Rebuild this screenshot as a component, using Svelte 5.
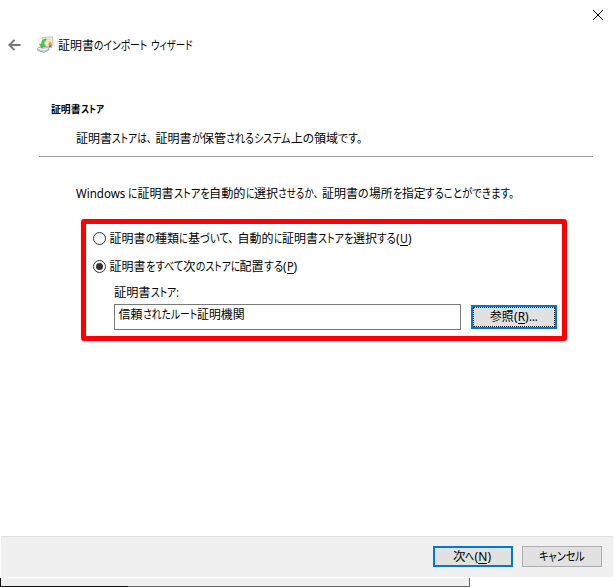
<script>
  // Each run is [text, width, kind]; "u" marks an access key.
  const lines = {
    title: [['証明書', 36], ['のインポート', 53], ['', 4], ['ウィザード', 41.5]],
    heading: [['証明書', 29.5], ['ストア', 23]],
    sub: [['証明書', 36], ['ストアは、', 39.5], ['', 4], ['証明書', 36], ['が', 10.5], ['保管', 24], ['されるシステム', 64.5], ['上の', 23.5], ['領域', 24], ['です。', 24.5]],
    intro: [['Windows', 49], ['', 3], ['に', 9.5], ['証明書', 36], ['ストアを', 35.5], ['自動的', 36.5], ['に', 8.5], ['選択', 24], ['させるか、', 40], ['', 4], ['証明書', 36], ['の', 11], ['場所', 23.5], ['を', 9], ['指定', 23.5], ['することができます。', 89.5]],
    auto: [['証明書', 36], ['の', 9.5], ['種類', 24], ['に', 9], ['基', 12], ['づいて、', 33.5], ['', 4], ['自動的', 36], ['に', 8.5], ['証明書', 36], ['ストアを', 35], ['選択', 24], ['する', 19], ['(', 4], ['U', 8, 'u'], [')', 4]],
    manual: [['証明書', 36], ['をすべて', 37.5], ['次', 12.5], ['のストアに', 44], ['配置', 24], ['する', 19.5], ['(', 4], ['P', 6.5, 'u'], [')', 4]],
    label: [['証明書', 36.5], ['ストア:', 27.5]],
    value: [['信頼', 24], ['されたルート', 54], ['証明機関', 47.5]],
    browse: [['参照', 23.5], ['(', 4], ['R', 7, 'u'], [')', 4], ['...', 9]],
    next: [['次', 12.5], ['へ', 9], ['(', 4], ['N', 9, 'u'], [')', 4]],
    cancel: [['キャンセル', 45.5]]
  };

  function fit(node, width) {
    const natural = node.offsetWidth;
    if (natural) node.style.transform = `scaleX(${width / natural})`;
  }
</script>

{#snippet line(runs)}<span class="line">{#each runs as [text, width, kind]}<span class="run" class:key={kind === 'u'} style="width:{width}px"><span class="glyphs" use:fit={width}>{text}</span></span>{/each}</span>{/snippet}

<div class="window">
  <div class="caption">
    <svg width="12" height="12" viewBox="0 0 12 12"><path d="M1 1 L11 11 M11 1 L1 11" stroke="#000" stroke-width="1" /></svg>
  </div>
  <header>
    <svg class="back" width="13" height="12" viewBox="0 0 13 12" fill="none" stroke="#777" stroke-width="2"><path d="M12.5 6H1.5M6.5 .9 1.4 6l5.1 5.1" /></svg>
    <svg class="cert" width="17" height="17" viewBox="0 0 17 17">
      <path d="M5 1.5 15.5.8 16 9.5 5.8 11z" fill="#f5f1dc" stroke="#b9b5a4" stroke-width=".8" />
      <path d="M8 3.5 14 3M9 5.5l5-.4" stroke="#d0cab0" stroke-width=".8" />
      <path d="m12 8.5-.3 3.6 1.4-.8 1.5.8-.3-3.6z" fill="#3d7cd0" />
      <circle cx="13.1" cy="7.7" r="1.8" fill="#f0a21c" />
      <path d="m.8 12 4.5-2 6.4 1.7v2.3L7 16.4.8 14.4z" fill="#d0d3d3" stroke="#8f9496" stroke-width=".8" />
      <path d="m1.2 12.2 5.8 1.6 4.5-2" fill="none" stroke="#fafafa" />
      <path d="M8.7 2.6C5.7 3.2 4.4 5.4 4.5 8.3L2.3 8 5 12.3l3.7-3.2-1.8-.5c0-2.3.6-4 2.3-4.6z" fill="#42cc45" stroke="#239b32" stroke-width=".4" />
    </svg>
    <h1>{@render line(lines.title)}</h1>
  </header>
  <main>
    <h2>{@render line(lines.heading)}</h2>
    <p class="sub">{@render line(lines.sub)}</p>
    <hr />
    <p class="intro">{@render line(lines.intro)}</p>
    <section>
      <div class="radio"><i></i>{@render line(lines.auto)}</div>
      <div class="radio second"><i class="on"></i>{@render line(lines.manual)}</div>
      <div class="label">{@render line(lines.label)}</div>
      <div class="row">
        <div class="field">{@render line(lines.value)}</div>
        <button class="browse"><span class="focus">{@render line(lines.browse)}</span></button>
      </div>
    </section>
  </main>
  <footer>
    <button class="next">{@render line(lines.next)}</button>
    <button class="cancel">{@render line(lines.cancel)}</button>
  </footer>
  <div class="behind"><div class="pane"></div></div>
</div>

<style>
  .window {
    width: 614px;
    height: 587px;
    background: #fff;
    color: #000;
    display: flex;
    flex-direction: column;
    overflow: hidden;
    box-sizing: border-box;
    font: 12px/18px "Noto Sans", "Noto Sans CJK JP", sans-serif;
  }
  .window * { box-sizing: border-box; }
  h1, h2, p { margin: 0; font: inherit; }
  .line { display: flex; white-space: nowrap; height: 18px; }
  .run { display: block; flex: none; height: 18px; }
  .glyphs {
    display: inline-block;
    transform-origin: 0 50%;
    font-feature-settings: "palt";
    line-height: 18px;
    vertical-align: top;
  }
  .key { background: linear-gradient(#000, #000) 0 15px / 100% 1px no-repeat; }
  .caption { height: 32px; display: flex; justify-content: flex-end; padding: 9px 10px 0 0; }
  header { height: 28px; display: flex; padding: 4px 0 0 9px; }
  .back { margin: 3px 0 0 -1px; }
  .cert { margin: 0 0 0 16px; }
  h1 { margin: 1px 0 0 4px; }
  main { height: 476px; padding-top: 40px; }
  h2 { margin-left: 51px; font-weight: 700; font-size: 10px; height: 18px; }
  .sub { margin: 12px 0 0 76px; }
  hr { margin: 8px 0 0 39px; width: 554px; height: 1px; border: 0; background: #a0a0a0; }
  .intro { margin: 28px 0 0 76px; }
  section {
    margin: 16px 0 0 81px;
    width: 486px;
    height: 122px;
    border: 5px solid #f00;
    border-radius: 3px;
    box-shadow: 0 0 1px #ff000080;
    padding: 6px 0 0 7px;
  }
  .radio { display: flex; gap: 4px; height: 18px; }
  .radio .line { margin-left: -0.5px; }
  .second { margin-top: 10px; }
  i { width: 13px; height: 13px; margin-top: 2px; border: 1px solid #333; border-radius: 50%; flex: none; display: grid; place-items: center; }
  .on::after { content: ""; width: 7px; height: 7px; border-radius: 50%; background: #333; }
  .label { margin: 8px 0 0 21px; }
  .row { display: flex; margin: 2px 0 0 21px; gap: 10px; }
  .field { width: 347px; height: 26px; flex: none; border: 1px solid #7a7a7a; padding: 1px 0 0 3.5px; }
  button {
    border: 2px solid #0078d7;
    background: #e1e1e1;
    color: #000;
    font: inherit;
    padding: 0;
    display: flex;
    align-items: center;
    justify-content: center;
  }
  .browse { width: 86px; height: 24px; flex: none; margin-top: 1px; }
  .focus { width: 82px; height: 20px; border: 1px dotted #000; display: flex; align-items: center; justify-content: center; }
  footer {
    height: 41px;
    margin: 0 1px;
    background: #f0f0f0;
    border-top: 1px solid #dfdfdf;
    display: flex;
    justify-content: flex-end;
    gap: 9px;
    padding: 9px 11px 0 0;
  }
  footer button { width: 80px; height: 21px; }
  .next .line { margin-left: -2px; }
  .cancel { border: 1px solid #adadad; }
  .behind { height: 10px; padding-top: 1px; }
  .pane {
    width: 470px;
    height: 9px;
    background: linear-gradient(90deg, #111 127px, #666 127px) 0 8px / 100% 1px no-repeat, #f0f0f0;
    border-left: 1px solid #111;
    border-right: 1px solid #666;
  }
</style>
